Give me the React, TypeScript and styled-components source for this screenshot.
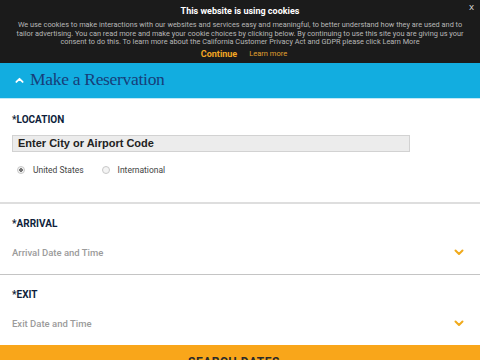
import React, { useState } from 'react';
import styled, { createGlobalStyle } from 'styled-components';

const GlobalStyle = createGlobalStyle`
  html, body {
    margin: 0;
    padding: 0;
    background: #fff;
    font-family: Roboto, "Liberation Sans", sans-serif;
    overflow: hidden;
  }
`;

const Page = styled.div`
  width: 480px;
  height: 360px;
  overflow: hidden;
  display: flex;
  flex-direction: column;
`;

const CookieBar = styled.div`
  position: relative;
  flex: none;
  background: #1b1b1b;
  color: #fff;
  text-align: center;
  padding: 4px 10px 0;
  height: 59px;
`;

const CookieTitle = styled.div`
  font-weight: bold;
  font-size: 9px;
  line-height: 14px;
  color: #fff;
`;

const CookieText = styled.p`
  margin: 3px 0 0;
  font-size: 7.35px;
  line-height: 8.6px;
  color: #b8b8b8;
`;

const CookieActions = styled.div`
  display: flex;
  justify-content: center;
  align-items: center;
  gap: 12px;
  margin-top: 2px;
  margin-left: 8px;
`;

const ContinueLink = styled.span`
  color: #f2a623;
  font-weight: bold;
  font-size: 9px;
`;

const LearnLink = styled.span`
  color: #e0a030;
  font-size: 7.5px;
`;

const CloseX = styled.span`
  position: absolute;
  top: 3px;
  right: 6px;
  font-size: 8px;
  color: #ddd;
`;

const Header = styled.div`
  flex: none;
  background: #12ade0;
  height: 35px;
  display: flex;
  align-items: center;
  gap: 6px;
  padding-left: 15px;
  border-bottom: 1px solid #bfe9f7;
`;

const HeaderTitle = styled.h1`
  margin: 0 0 2px;
  font-family: "Liberation Serif", "DejaVu Serif", serif;
  font-weight: normal;
  font-size: 17.5px;
  letter-spacing: -0.3px;
  color: #173e79;
`;

const Section = styled.div<{ $border?: string; $top: number }>`
  flex: none;
  padding: ${p => p.$top}px 12px 0;
  border-bottom: ${p => p.$border || 'none'};
`;

const Label = styled.div`
  font-size: 10px;
  font-weight: bold;
  color: #0f1f3c;
  line-height: 14px;
`;

const Input = styled.div`
  margin-top: 8px;
  width: 398px;
  height: 17px;
  box-sizing: border-box;
  background: #ececec;
  border: 1px solid #d2d2d2;
  font-family: "Liberation Sans", Arial, sans-serif;
  font-weight: bold;
  font-size: 11px;
  color: #222;
  padding-left: 5px;
  line-height: 15px;
`;

const RadioRow = styled.div`
  display: flex;
  align-items: center;
  padding: 11px 0 0 5px;
  height: 14px;
  margin-bottom: 25px;
`;

const RadioOption = styled.label`
  display: flex;
  align-items: center;
  gap: 8px;
  margin-right: 18px;
  font-size: 8.5px;
  color: #444;
`;

const RadioDot = styled.span<{ $checked?: boolean }>`
  width: 6px;
  height: 6px;
  border-radius: 50%;
  border: 1px solid #c8c8c8;
  background: ${p => (p.$checked ? 'radial-gradient(circle, #777 0 1.6px, #f2f2f2 2px)' : '#f4f4f4')};
`;

const Divider = styled.div`
  flex: none;
  height: 2px;
  background: #dedede;
`;

const Picker = styled.div`
  display: flex;
  align-items: center;
  justify-content: space-between;
  padding: 11px 4px 0 0;
  height: 20px;
  margin-bottom: 12px;
`;

const Placeholder = styled.span`
  font-size: 9.5px;
  color: #9b9b9b;
  font-weight: 500;
`;

const SearchButton = styled.div`
  flex: none;
  background: #f9a61a;
  height: 30px;
  display: flex;
  justify-content: center;
  padding-top: 10px;
  font-weight: bold;
  font-size: 12px;
  color: #2a2a2a;
  letter-spacing: 0.5px;
  gap: 8px;
`;

const Chevron = ({ up, color, size }: { up?: boolean; color: string; size: number }) => (
  <svg width={size} height={size * 0.7} viewBox="0 0 10 7">
    <path
      d={up ? 'M1.5 5.5 L5 2 L8.5 5.5' : 'M1.5 1.5 L5 5 L8.5 1.5'}
      fill="none"
      stroke={color}
      strokeWidth={2}
      strokeLinecap="round"
      strokeLinejoin="round"
    />
  </svg>
);

const App: React.FC = () => {
  const [region, setRegion] = useState('us');

  return (
    <Page>
      <GlobalStyle />
      <CookieBar>
        <CloseX>X</CloseX>
        <CookieTitle>This website is using cookies</CookieTitle>
        <CookieText>
          We use cookies to make interactions with our websites and services easy and meaningful, to better understand how they are used and to
          tailor advertising. You can read more and make your cookie choices by clicking below. By continuing to use this site you are giving us your
          consent to do this. To learn more about the California Customer Privacy Act and GDPR please click Learn More
        </CookieText>
        <CookieActions>
          <ContinueLink>Continue</ContinueLink>
          <LearnLink>Learn more</LearnLink>
        </CookieActions>
      </CookieBar>

      <Header>
        <Chevron up color="#ffffff" size={9} />
        <HeaderTitle>Make a Reservation</HeaderTitle>
      </Header>

      <Section $top={14}>
        <Label>*LOCATION</Label>
        <Input>Enter City or Airport Code</Input>
        <RadioRow>
          <RadioOption onClick={() => setRegion('us')}>
            <RadioDot $checked={region === 'us'} />
            United States
          </RadioOption>
          <RadioOption onClick={() => setRegion('intl')}>
            <RadioDot $checked={region === 'intl'} />
            International
          </RadioOption>
        </RadioRow>
      </Section>
      <Divider />

      <Section $top={13} $border="1px solid #c4c4c4">
        <Label>*ARRIVAL</Label>
        <Picker>
          <Placeholder>Arrival Date and Time</Placeholder>
          <Chevron color="#f0aa1c" size={10} />
        </Picker>
      </Section>

      <Section $top={13}>
        <Label>*EXIT</Label>
        <Picker>
          <Placeholder>Exit Date and Time</Placeholder>
          <Chevron color="#f0aa1c" size={10} />
        </Picker>
      </Section>

      <SearchButton>
        <span>SEARCH DATES</span>
        <span>›</span>
      </SearchButton>
    </Page>
  );
};

export default App;
